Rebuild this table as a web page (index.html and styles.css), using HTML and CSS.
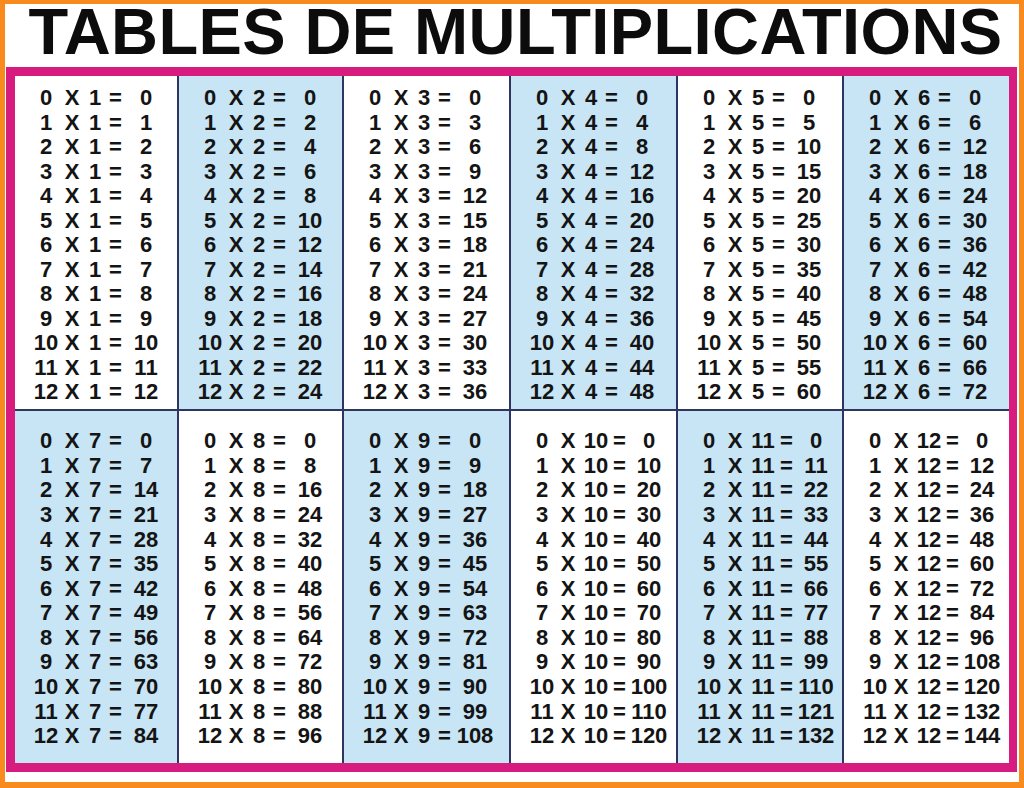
FILE: index.html
```html
<!DOCTYPE html>
<html lang="fr">
<head>
<meta charset="utf-8">
<title>Tables de multiplications</title>
<link rel="stylesheet" href="styles.css">
</head>
<body>
<div class="sheet">
  <h1 class="title">TABLES DE MULTIPLICATIONS</h1>
  <div class="board">
    <div class="cell">
      <div class="ln"><span>0</span><span>X</span><span>1</span><span>=</span><span>0</span></div>
      <div class="ln"><span>1</span><span>X</span><span>1</span><span>=</span><span>1</span></div>
      <div class="ln"><span>2</span><span>X</span><span>1</span><span>=</span><span>2</span></div>
      <div class="ln"><span>3</span><span>X</span><span>1</span><span>=</span><span>3</span></div>
      <div class="ln"><span>4</span><span>X</span><span>1</span><span>=</span><span>4</span></div>
      <div class="ln"><span>5</span><span>X</span><span>1</span><span>=</span><span>5</span></div>
      <div class="ln"><span>6</span><span>X</span><span>1</span><span>=</span><span>6</span></div>
      <div class="ln"><span>7</span><span>X</span><span>1</span><span>=</span><span>7</span></div>
      <div class="ln"><span>8</span><span>X</span><span>1</span><span>=</span><span>8</span></div>
      <div class="ln"><span>9</span><span>X</span><span>1</span><span>=</span><span>9</span></div>
      <div class="ln"><span>10</span><span>X</span><span>1</span><span>=</span><span>10</span></div>
      <div class="ln"><span>11</span><span>X</span><span>1</span><span>=</span><span>11</span></div>
      <div class="ln"><span>12</span><span>X</span><span>1</span><span>=</span><span>12</span></div>
    </div>
    <div class="cell blue">
      <div class="ln"><span>0</span><span>X</span><span>2</span><span>=</span><span>0</span></div>
      <div class="ln"><span>1</span><span>X</span><span>2</span><span>=</span><span>2</span></div>
      <div class="ln"><span>2</span><span>X</span><span>2</span><span>=</span><span>4</span></div>
      <div class="ln"><span>3</span><span>X</span><span>2</span><span>=</span><span>6</span></div>
      <div class="ln"><span>4</span><span>X</span><span>2</span><span>=</span><span>8</span></div>
      <div class="ln"><span>5</span><span>X</span><span>2</span><span>=</span><span>10</span></div>
      <div class="ln"><span>6</span><span>X</span><span>2</span><span>=</span><span>12</span></div>
      <div class="ln"><span>7</span><span>X</span><span>2</span><span>=</span><span>14</span></div>
      <div class="ln"><span>8</span><span>X</span><span>2</span><span>=</span><span>16</span></div>
      <div class="ln"><span>9</span><span>X</span><span>2</span><span>=</span><span>18</span></div>
      <div class="ln"><span>10</span><span>X</span><span>2</span><span>=</span><span>20</span></div>
      <div class="ln"><span>11</span><span>X</span><span>2</span><span>=</span><span>22</span></div>
      <div class="ln"><span>12</span><span>X</span><span>2</span><span>=</span><span>24</span></div>
    </div>
    <div class="cell">
      <div class="ln"><span>0</span><span>X</span><span>3</span><span>=</span><span>0</span></div>
      <div class="ln"><span>1</span><span>X</span><span>3</span><span>=</span><span>3</span></div>
      <div class="ln"><span>2</span><span>X</span><span>3</span><span>=</span><span>6</span></div>
      <div class="ln"><span>3</span><span>X</span><span>3</span><span>=</span><span>9</span></div>
      <div class="ln"><span>4</span><span>X</span><span>3</span><span>=</span><span>12</span></div>
      <div class="ln"><span>5</span><span>X</span><span>3</span><span>=</span><span>15</span></div>
      <div class="ln"><span>6</span><span>X</span><span>3</span><span>=</span><span>18</span></div>
      <div class="ln"><span>7</span><span>X</span><span>3</span><span>=</span><span>21</span></div>
      <div class="ln"><span>8</span><span>X</span><span>3</span><span>=</span><span>24</span></div>
      <div class="ln"><span>9</span><span>X</span><span>3</span><span>=</span><span>27</span></div>
      <div class="ln"><span>10</span><span>X</span><span>3</span><span>=</span><span>30</span></div>
      <div class="ln"><span>11</span><span>X</span><span>3</span><span>=</span><span>33</span></div>
      <div class="ln"><span>12</span><span>X</span><span>3</span><span>=</span><span>36</span></div>
    </div>
    <div class="cell blue">
      <div class="ln"><span>0</span><span>X</span><span>4</span><span>=</span><span>0</span></div>
      <div class="ln"><span>1</span><span>X</span><span>4</span><span>=</span><span>4</span></div>
      <div class="ln"><span>2</span><span>X</span><span>4</span><span>=</span><span>8</span></div>
      <div class="ln"><span>3</span><span>X</span><span>4</span><span>=</span><span>12</span></div>
      <div class="ln"><span>4</span><span>X</span><span>4</span><span>=</span><span>16</span></div>
      <div class="ln"><span>5</span><span>X</span><span>4</span><span>=</span><span>20</span></div>
      <div class="ln"><span>6</span><span>X</span><span>4</span><span>=</span><span>24</span></div>
      <div class="ln"><span>7</span><span>X</span><span>4</span><span>=</span><span>28</span></div>
      <div class="ln"><span>8</span><span>X</span><span>4</span><span>=</span><span>32</span></div>
      <div class="ln"><span>9</span><span>X</span><span>4</span><span>=</span><span>36</span></div>
      <div class="ln"><span>10</span><span>X</span><span>4</span><span>=</span><span>40</span></div>
      <div class="ln"><span>11</span><span>X</span><span>4</span><span>=</span><span>44</span></div>
      <div class="ln"><span>12</span><span>X</span><span>4</span><span>=</span><span>48</span></div>
    </div>
    <div class="cell">
      <div class="ln"><span>0</span><span>X</span><span>5</span><span>=</span><span>0</span></div>
      <div class="ln"><span>1</span><span>X</span><span>5</span><span>=</span><span>5</span></div>
      <div class="ln"><span>2</span><span>X</span><span>5</span><span>=</span><span>10</span></div>
      <div class="ln"><span>3</span><span>X</span><span>5</span><span>=</span><span>15</span></div>
      <div class="ln"><span>4</span><span>X</span><span>5</span><span>=</span><span>20</span></div>
      <div class="ln"><span>5</span><span>X</span><span>5</span><span>=</span><span>25</span></div>
      <div class="ln"><span>6</span><span>X</span><span>5</span><span>=</span><span>30</span></div>
      <div class="ln"><span>7</span><span>X</span><span>5</span><span>=</span><span>35</span></div>
      <div class="ln"><span>8</span><span>X</span><span>5</span><span>=</span><span>40</span></div>
      <div class="ln"><span>9</span><span>X</span><span>5</span><span>=</span><span>45</span></div>
      <div class="ln"><span>10</span><span>X</span><span>5</span><span>=</span><span>50</span></div>
      <div class="ln"><span>11</span><span>X</span><span>5</span><span>=</span><span>55</span></div>
      <div class="ln"><span>12</span><span>X</span><span>5</span><span>=</span><span>60</span></div>
    </div>
    <div class="cell blue">
      <div class="ln"><span>0</span><span>X</span><span>6</span><span>=</span><span>0</span></div>
      <div class="ln"><span>1</span><span>X</span><span>6</span><span>=</span><span>6</span></div>
      <div class="ln"><span>2</span><span>X</span><span>6</span><span>=</span><span>12</span></div>
      <div class="ln"><span>3</span><span>X</span><span>6</span><span>=</span><span>18</span></div>
      <div class="ln"><span>4</span><span>X</span><span>6</span><span>=</span><span>24</span></div>
      <div class="ln"><span>5</span><span>X</span><span>6</span><span>=</span><span>30</span></div>
      <div class="ln"><span>6</span><span>X</span><span>6</span><span>=</span><span>36</span></div>
      <div class="ln"><span>7</span><span>X</span><span>6</span><span>=</span><span>42</span></div>
      <div class="ln"><span>8</span><span>X</span><span>6</span><span>=</span><span>48</span></div>
      <div class="ln"><span>9</span><span>X</span><span>6</span><span>=</span><span>54</span></div>
      <div class="ln"><span>10</span><span>X</span><span>6</span><span>=</span><span>60</span></div>
      <div class="ln"><span>11</span><span>X</span><span>6</span><span>=</span><span>66</span></div>
      <div class="ln"><span>12</span><span>X</span><span>6</span><span>=</span><span>72</span></div>
    </div>

    <div class="cell blue low">
      <div class="ln"><span>0</span><span>X</span><span>7</span><span>=</span><span>0</span></div>
      <div class="ln"><span>1</span><span>X</span><span>7</span><span>=</span><span>7</span></div>
      <div class="ln"><span>2</span><span>X</span><span>7</span><span>=</span><span>14</span></div>
      <div class="ln"><span>3</span><span>X</span><span>7</span><span>=</span><span>21</span></div>
      <div class="ln"><span>4</span><span>X</span><span>7</span><span>=</span><span>28</span></div>
      <div class="ln"><span>5</span><span>X</span><span>7</span><span>=</span><span>35</span></div>
      <div class="ln"><span>6</span><span>X</span><span>7</span><span>=</span><span>42</span></div>
      <div class="ln"><span>7</span><span>X</span><span>7</span><span>=</span><span>49</span></div>
      <div class="ln"><span>8</span><span>X</span><span>7</span><span>=</span><span>56</span></div>
      <div class="ln"><span>9</span><span>X</span><span>7</span><span>=</span><span>63</span></div>
      <div class="ln"><span>10</span><span>X</span><span>7</span><span>=</span><span>70</span></div>
      <div class="ln"><span>11</span><span>X</span><span>7</span><span>=</span><span>77</span></div>
      <div class="ln"><span>12</span><span>X</span><span>7</span><span>=</span><span>84</span></div>
    </div>
    <div class="cell low">
      <div class="ln"><span>0</span><span>X</span><span>8</span><span>=</span><span>0</span></div>
      <div class="ln"><span>1</span><span>X</span><span>8</span><span>=</span><span>8</span></div>
      <div class="ln"><span>2</span><span>X</span><span>8</span><span>=</span><span>16</span></div>
      <div class="ln"><span>3</span><span>X</span><span>8</span><span>=</span><span>24</span></div>
      <div class="ln"><span>4</span><span>X</span><span>8</span><span>=</span><span>32</span></div>
      <div class="ln"><span>5</span><span>X</span><span>8</span><span>=</span><span>40</span></div>
      <div class="ln"><span>6</span><span>X</span><span>8</span><span>=</span><span>48</span></div>
      <div class="ln"><span>7</span><span>X</span><span>8</span><span>=</span><span>56</span></div>
      <div class="ln"><span>8</span><span>X</span><span>8</span><span>=</span><span>64</span></div>
      <div class="ln"><span>9</span><span>X</span><span>8</span><span>=</span><span>72</span></div>
      <div class="ln"><span>10</span><span>X</span><span>8</span><span>=</span><span>80</span></div>
      <div class="ln"><span>11</span><span>X</span><span>8</span><span>=</span><span>88</span></div>
      <div class="ln"><span>12</span><span>X</span><span>8</span><span>=</span><span>96</span></div>
    </div>
    <div class="cell blue low">
      <div class="ln"><span>0</span><span>X</span><span>9</span><span>=</span><span>0</span></div>
      <div class="ln"><span>1</span><span>X</span><span>9</span><span>=</span><span>9</span></div>
      <div class="ln"><span>2</span><span>X</span><span>9</span><span>=</span><span>18</span></div>
      <div class="ln"><span>3</span><span>X</span><span>9</span><span>=</span><span>27</span></div>
      <div class="ln"><span>4</span><span>X</span><span>9</span><span>=</span><span>36</span></div>
      <div class="ln"><span>5</span><span>X</span><span>9</span><span>=</span><span>45</span></div>
      <div class="ln"><span>6</span><span>X</span><span>9</span><span>=</span><span>54</span></div>
      <div class="ln"><span>7</span><span>X</span><span>9</span><span>=</span><span>63</span></div>
      <div class="ln"><span>8</span><span>X</span><span>9</span><span>=</span><span>72</span></div>
      <div class="ln"><span>9</span><span>X</span><span>9</span><span>=</span><span>81</span></div>
      <div class="ln"><span>10</span><span>X</span><span>9</span><span>=</span><span>90</span></div>
      <div class="ln"><span>11</span><span>X</span><span>9</span><span>=</span><span>99</span></div>
      <div class="ln"><span>12</span><span>X</span><span>9</span><span>=</span><span>108</span></div>
    </div>
    <div class="cell low wide">
      <div class="ln"><span>0</span><span>X</span><span>10</span><span>=</span><span>0</span></div>
      <div class="ln"><span>1</span><span>X</span><span>10</span><span>=</span><span>10</span></div>
      <div class="ln"><span>2</span><span>X</span><span>10</span><span>=</span><span>20</span></div>
      <div class="ln"><span>3</span><span>X</span><span>10</span><span>=</span><span>30</span></div>
      <div class="ln"><span>4</span><span>X</span><span>10</span><span>=</span><span>40</span></div>
      <div class="ln"><span>5</span><span>X</span><span>10</span><span>=</span><span>50</span></div>
      <div class="ln"><span>6</span><span>X</span><span>10</span><span>=</span><span>60</span></div>
      <div class="ln"><span>7</span><span>X</span><span>10</span><span>=</span><span>70</span></div>
      <div class="ln"><span>8</span><span>X</span><span>10</span><span>=</span><span>80</span></div>
      <div class="ln"><span>9</span><span>X</span><span>10</span><span>=</span><span>90</span></div>
      <div class="ln"><span>10</span><span>X</span><span>10</span><span>=</span><span>100</span></div>
      <div class="ln"><span>11</span><span>X</span><span>10</span><span>=</span><span>110</span></div>
      <div class="ln"><span>12</span><span>X</span><span>10</span><span>=</span><span>120</span></div>
    </div>
    <div class="cell blue low wide">
      <div class="ln"><span>0</span><span>X</span><span>11</span><span>=</span><span>0</span></div>
      <div class="ln"><span>1</span><span>X</span><span>11</span><span>=</span><span>11</span></div>
      <div class="ln"><span>2</span><span>X</span><span>11</span><span>=</span><span>22</span></div>
      <div class="ln"><span>3</span><span>X</span><span>11</span><span>=</span><span>33</span></div>
      <div class="ln"><span>4</span><span>X</span><span>11</span><span>=</span><span>44</span></div>
      <div class="ln"><span>5</span><span>X</span><span>11</span><span>=</span><span>55</span></div>
      <div class="ln"><span>6</span><span>X</span><span>11</span><span>=</span><span>66</span></div>
      <div class="ln"><span>7</span><span>X</span><span>11</span><span>=</span><span>77</span></div>
      <div class="ln"><span>8</span><span>X</span><span>11</span><span>=</span><span>88</span></div>
      <div class="ln"><span>9</span><span>X</span><span>11</span><span>=</span><span>99</span></div>
      <div class="ln"><span>10</span><span>X</span><span>11</span><span>=</span><span>110</span></div>
      <div class="ln"><span>11</span><span>X</span><span>11</span><span>=</span><span>121</span></div>
      <div class="ln"><span>12</span><span>X</span><span>11</span><span>=</span><span>132</span></div>
    </div>
    <div class="cell low wide">
      <div class="ln"><span>0</span><span>X</span><span>12</span><span>=</span><span>0</span></div>
      <div class="ln"><span>1</span><span>X</span><span>12</span><span>=</span><span>12</span></div>
      <div class="ln"><span>2</span><span>X</span><span>12</span><span>=</span><span>24</span></div>
      <div class="ln"><span>3</span><span>X</span><span>12</span><span>=</span><span>36</span></div>
      <div class="ln"><span>4</span><span>X</span><span>12</span><span>=</span><span>48</span></div>
      <div class="ln"><span>5</span><span>X</span><span>12</span><span>=</span><span>60</span></div>
      <div class="ln"><span>6</span><span>X</span><span>12</span><span>=</span><span>72</span></div>
      <div class="ln"><span>7</span><span>X</span><span>12</span><span>=</span><span>84</span></div>
      <div class="ln"><span>8</span><span>X</span><span>12</span><span>=</span><span>96</span></div>
      <div class="ln"><span>9</span><span>X</span><span>12</span><span>=</span><span>108</span></div>
      <div class="ln"><span>10</span><span>X</span><span>12</span><span>=</span><span>120</span></div>
      <div class="ln"><span>11</span><span>X</span><span>12</span><span>=</span><span>132</span></div>
      <div class="ln"><span>12</span><span>X</span><span>12</span><span>=</span><span>144</span></div>
    </div>
  </div>
</div>
</body>
</html>
```
FILE: styles.css
```css
html, body {
  margin: 0;
}

body {
  width: 1024px;
  height: 788px;
  box-sizing: border-box;
  padding: 4px 5px 6px 5px;
  background: #f98a1e;
  font-family: "Liberation Sans", Arial, sans-serif;
  color: #141414;
}

.sheet {
  height: 100%;
  box-sizing: border-box;
  display: flex;
  flex-direction: column;
  padding: 0 2px 10px 1px;
  background: #ffffff;
}

.title {
  height: 56px;
  margin: 0 0 7px 0;
  padding-left: 8px;
  font-size: 65px;
  line-height: 56px;
  font-weight: bold;
  letter-spacing: 0.4px;
  text-align: center;
  white-space: nowrap;
  color: #0c0c0c;
}

.board {
  display: grid;
  grid-template-columns: 162px 163px 165px 165px 164px 165px;
  grid-template-rows: 333px 352px;
  gap: 2px;
  border: 9px solid #d81b7e;
  border-right-width: 8px;
  background: #2e3561;
}

.cell {
  display: flex;
  flex-direction: column;
  justify-content: center;
  padding-left: 18px;
  padding-top: 6px;
  background: #ffffff;
}

.cell.low {
  padding-top: 4px;
}

.blue {
  background: #c8e5f5;
}

.ln {
  display: flex;
  height: 24.5px;
  line-height: 24.5px;
  font-size: 22px;
  font-weight: bold;
}

.low .ln {
  height: 24.6px;
  line-height: 24.6px;
}

.ln span {
  flex: none;
  text-align: center;
  white-space: nowrap;
}

.ln span:nth-child(1) {
  width: 26px;
}

.ln span:nth-child(2) {
  width: 16px;
  margin-left: 5px;
}

.ln span:nth-child(3) {
  width: 16px;
  margin-left: 7px;
}

.ln span:nth-child(4) {
  width: 12px;
  margin-left: 6px;
}

.ln span:nth-child(5) {
  width: 42px;
  margin-left: 4px;
}

.wide .ln span:nth-child(3) {
  width: 26px;
  margin-left: 7px;
}

.wide .ln span:nth-child(4) {
  margin-left: 4px;
}

.wide .ln span:nth-child(5) {
  width: 44px;
  margin-left: 2px;
}
```
